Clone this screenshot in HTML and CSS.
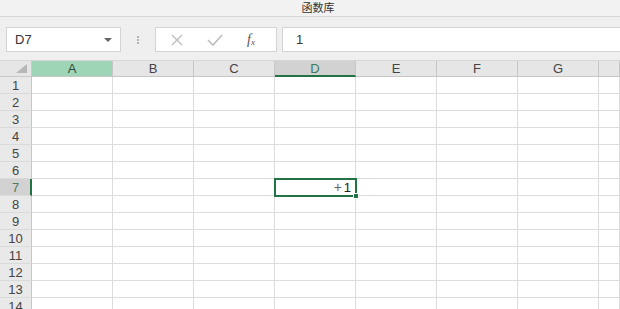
FILE: index.html
```html
<!DOCTYPE html>
<html lang="zh">
<head>
<meta charset="utf-8">
<title>函数库</title>
<link rel="stylesheet" href="styles.css">
</head>
<body>
<div class="app">
  <div class="titlebar">函数库</div>
  <div class="toolbar">
    <div class="namebox"><span>D7</span><span class="caret"></span></div>
    <div class="dots"><i></i><i></i><i></i></div>
    <div class="fxbox">
      <svg class="ico ico-x" width="20" height="14" viewBox="0 0 20 14"><path d="M5 2 L15 12 M15 2 L5 12" stroke="#bdbdbd" stroke-width="1.4" fill="none"/></svg>
      <svg class="ico ico-ok" width="20" height="14" viewBox="0 0 20 14"><path d="M3 7 L8 12 L17 2" stroke="#bdbdbd" stroke-width="1.6" fill="none"/></svg>
      <span class="fx">f<sub>x</sub></span>
    </div>
    <div class="input">1</div>
  </div>
  <div class="sheet">
    <div class="corner"><span class="tri"></span></div>
    <div class="ch sel-a">A</div><div class="ch">B</div><div class="ch">C</div><div class="ch sel-d">D</div><div class="ch">E</div><div class="ch">F</div><div class="ch">G</div><div class="ch"></div>

    <div class="rh">1</div><div class="c"></div><div class="c"></div><div class="c"></div><div class="c"></div><div class="c"></div><div class="c"></div><div class="c"></div><div class="c"></div>
    <div class="rh">2</div><div class="c"></div><div class="c"></div><div class="c"></div><div class="c"></div><div class="c"></div><div class="c"></div><div class="c"></div><div class="c"></div>
    <div class="rh">3</div><div class="c"></div><div class="c"></div><div class="c"></div><div class="c"></div><div class="c"></div><div class="c"></div><div class="c"></div><div class="c"></div>
    <div class="rh">4</div><div class="c"></div><div class="c"></div><div class="c"></div><div class="c"></div><div class="c"></div><div class="c"></div><div class="c"></div><div class="c"></div>
    <div class="rh">5</div><div class="c"></div><div class="c"></div><div class="c"></div><div class="c"></div><div class="c"></div><div class="c"></div><div class="c"></div><div class="c"></div>
    <div class="rh">6</div><div class="c"></div><div class="c"></div><div class="c"></div><div class="c"></div><div class="c"></div><div class="c"></div><div class="c"></div><div class="c"></div>
    <div class="rh sel-r">7</div><div class="c"></div><div class="c"></div><div class="c"></div><div class="c active"><span class="cursor">+</span><span class="val">1</span><span class="frame"></span><span class="handle"></span></div><div class="c"></div><div class="c"></div><div class="c"></div><div class="c"></div>
    <div class="rh">8</div><div class="c"></div><div class="c"></div><div class="c"></div><div class="c"></div><div class="c"></div><div class="c"></div><div class="c"></div><div class="c"></div>
    <div class="rh">9</div><div class="c"></div><div class="c"></div><div class="c"></div><div class="c"></div><div class="c"></div><div class="c"></div><div class="c"></div><div class="c"></div>
    <div class="rh">10</div><div class="c"></div><div class="c"></div><div class="c"></div><div class="c"></div><div class="c"></div><div class="c"></div><div class="c"></div><div class="c"></div>
    <div class="rh">11</div><div class="c"></div><div class="c"></div><div class="c"></div><div class="c"></div><div class="c"></div><div class="c"></div><div class="c"></div><div class="c"></div>
    <div class="rh">12</div><div class="c"></div><div class="c"></div><div class="c"></div><div class="c"></div><div class="c"></div><div class="c"></div><div class="c"></div><div class="c"></div>
    <div class="rh">13</div><div class="c"></div><div class="c"></div><div class="c"></div><div class="c"></div><div class="c"></div><div class="c"></div><div class="c"></div><div class="c"></div>
    <div class="rh">14</div><div class="c"></div><div class="c"></div><div class="c"></div><div class="c"></div><div class="c"></div><div class="c"></div><div class="c"></div><div class="c"></div>
  </div>
</div>
</body>
</html>
```
FILE: styles.css
```css
* { box-sizing: border-box; }
html, body {
  margin: 0;
  padding: 0;
  width: 620px;
  height: 309px;
  overflow: hidden;
  background: #ffffff;
  font-family: "Liberation Sans", Arial, "Noto Sans CJK SC", sans-serif;
  color: #333;
}
.app { width: 620px; height: 309px; overflow: hidden; }

.titlebar {
  height: 17px;
  border-bottom: 1px solid #d8d8d8;
  background: #f2f2f2;
  font-family: "Noto Sans CJK SC", sans-serif;
  font-size: 11px;
  line-height: 15px;
  text-align: center;
  padding-left: 16px;
  color: #333;
}

.toolbar {
  height: 44px;
  background: #efefef;
  border-bottom: 1px solid #d6d6d6;
  display: flex;
  align-items: flex-start;
  padding-top: 10px;
}
.namebox {
  margin-left: 6px;
  width: 115px;
  height: 25px;
  background: #fff;
  border: 1px solid #d4d4d4;
  display: flex;
  align-items: center;
  justify-content: space-between;
  padding: 0 8px 0 8px;
  font-size: 13px;
  color: #333;
}
.caret {
  width: 0;
  height: 0;
  border-left: 4px solid transparent;
  border-right: 4px solid transparent;
  border-top: 4px solid #666;
}
.dots {
  width: 34px;
  height: 25px;
  display: flex;
  flex-direction: column;
  align-items: center;
  justify-content: center;
  gap: 1px;
}
.dots i {
  display: block;
  width: 2px;
  height: 2px;
  background: #b4b4b4;
}
.fxbox {
  width: 122px;
  height: 25px;
  background: #fff;
  border: 1px solid #d4d4d4;
  display: flex;
  align-items: center;
  padding-left: 11px;
}
.ico { display: block; }
.ico-ok { margin-left: 18px; }
.fx {
  margin-left: 22px;
  font-family: "Liberation Serif", "Times New Roman", serif;
  font-style: italic;
  font-size: 14px;
  color: #555;
  line-height: 1;
}
.fx sub { font-size: 9px; vertical-align: -1px; }
.input {
  margin-left: 5px;
  flex: 1;
  height: 25px;
  background: #fff;
  border: 1px solid #d4d4d4;
  border-right: 0;
  padding-left: 13px;
  font-size: 13px;
  line-height: 23px;
  color: #333;
}

.sheet {
  display: grid;
  grid-template-columns: 32px repeat(7, 81px) 1fr;
  grid-template-rows: 16px repeat(14, 17px);
}
.corner {
  background: #e6e6e6;
  border-right: 1px solid #c8c8c8;
  border-bottom: 1px solid #c8c8c8;
  display: flex;
  justify-content: flex-end;
  align-items: flex-end;
  padding: 0 4px 3px 0;
}
.tri {
  width: 0;
  height: 0;
  border-left: 11px solid transparent;
  border-bottom: 9px solid #b7b7b7;
}
.ch {
  background: #e6e6e6;
  border-right: 1px solid #c6c6c6;
  border-bottom: 1px solid #c6c6c6;
  font-size: 13px;
  line-height: 15px;
  text-align: center;
  color: #444;
}
.ch.sel-a { background: #9fd5b7; color: #2f4d3c; }
.ch.sel-d {
  background: #d2d2d2;
  border-bottom: 2px solid #217346;
  color: #3c7a55;
}
.rh {
  background: #e9e9e9;
  border-right: 1px solid #c6c6c6;
  border-bottom: 1px solid #dadada;
  font-size: 13px;
  line-height: 17px;
  text-align: center;
  color: #444;
}
.rh.sel-r {
  background: #d2d2d2;
  border-right: 2px solid #217346;
  color: #4f7b62;
  padding-left: 1px;
}
.c {
  border-right: 1px solid #dcdcdc;
  border-bottom: 1px solid #dcdcdc;
  background: #fff;
}
.c.active {
  position: relative;
  display: flex;
  justify-content: flex-end;
  align-items: center;
  padding-right: 4px;
  font-size: 13px;
  color: #222;
}
.cursor {
  position: absolute;
  right: 13px;
  top: 0;
  font-size: 14px;
  line-height: 16px;
  color: #666;
}
.frame {
  position: absolute;
  left: -1px;
  top: -1px;
  right: -2px;
  bottom: -2px;
  border: 2px solid #217346;
}
.handle {
  position: absolute;
  right: -4px;
  bottom: -4px;
  width: 6px;
  height: 6px;
  background: #217346;
  border: 1px solid #fff;
}
```
